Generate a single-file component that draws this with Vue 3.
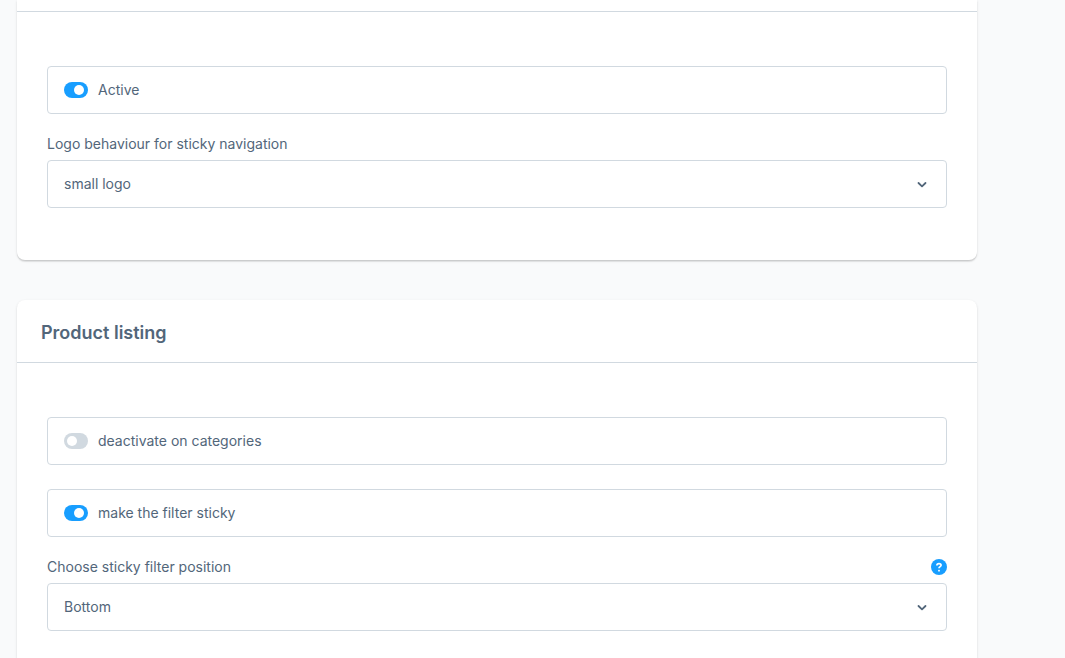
<template>
  <main class="page">
    <section class="card card--continued">
      <header class="card-header"></header>
      <div class="card-body">
        <label class="switch-field">
          <input v-model="navigationActive" type="checkbox" class="switch" />
          <span>Active</span>
        </label>

        <div class="select-field">
          <div class="field-head">
            <label for="logo-behaviour">Logo behaviour for sticky navigation</label>
          </div>
          <div class="select-box">
            <select id="logo-behaviour" v-model="logoBehaviour">
              <option v-for="option in logoOptions" :key="option">{{ option }}</option>
            </select>
            <svg class="chevron" viewBox="0 0 16 16" aria-hidden="true">
              <path d="M4.5 7 8 10.4 11.5 7" />
            </svg>
          </div>
        </div>
      </div>
    </section>

    <section class="card card--last">
      <header class="card-header">
        <h2>Product listing</h2>
      </header>
      <div class="card-body">
        <label class="switch-field">
          <input v-model="deactivated" type="checkbox" class="switch" />
          <span>deactivate on categories</span>
        </label>

        <label class="switch-field">
          <input v-model="filterSticky" type="checkbox" class="switch" />
          <span>make the filter sticky</span>
        </label>

        <div class="select-field">
          <div class="field-head">
            <label for="filter-position">Choose sticky filter position</label>
            <button type="button" class="help">
              <svg viewBox="0 0 16 16" aria-hidden="true">
                <circle cx="8" cy="8" r="8" />
                <path d="M5.9 6.4C5.9 5.2 6.8 4.6 8 4.6s2.1.6 2.1 1.7c0 1.4-2.1 1.3-2.1 2.9" />
                <rect x="7.1" y="10.8" width="1.8" height="1.8" rx="0.6" />
              </svg>
            </button>
          </div>
          <div class="select-box">
            <select id="filter-position" v-model="filterPosition">
              <option v-for="option in positionOptions" :key="option">{{ option }}</option>
            </select>
            <svg class="chevron" viewBox="0 0 16 16" aria-hidden="true">
              <path d="M4.5 7 8 10.4 11.5 7" />
            </svg>
          </div>
        </div>
      </div>
    </section>
  </main>
</template>

<script setup>
import { ref } from 'vue'

const logoOptions = ['small logo']
const positionOptions = ['Bottom']

const navigationActive = ref(true)
const logoBehaviour = ref('small logo')
const deactivated = ref(false)
const filterSticky = ref(true)
const filterPosition = ref('Bottom')
</script>

<style>
body {
  margin: 0;
  background: #f9fafb;
}
</style>

<style scoped>
.page {
  display: flex;
  flex-direction: column;
  gap: 40px;
  box-sizing: border-box;
  min-height: 100vh;
  padding: 0 88px 0 17px;
  background: #f9fafb;
  color: #52667a;
  font-family: Inter, sans-serif;
  font-size: 14px;
  line-height: 20px;
}

.card {
  background: #fff;
  border-radius: 8px;
  box-shadow: 0 1px 1px rgba(0, 0, 0, 0.08), 0 2px 1px rgba(0, 0, 0, 0.06), 0 1px 3px rgba(0, 0, 0, 0.1);
}

.card--continued {
  border-top-left-radius: 0;
  border-top-right-radius: 0;
}

/* runs on to the bottom edge of the window */
.card--last {
  flex: 1;
  border-bottom-left-radius: 0;
  border-bottom-right-radius: 0;
}

.card-header {
  padding: 21px 24px 17px;
  border-bottom: 1px solid #d1d9e0;
}

.card--continued .card-header {
  padding: 11px 0 0;
}

.card-header h2 {
  margin: 0;
  font-size: 18px;
  font-weight: 600;
  line-height: 24px;
}

.card-body {
  padding: 54px 30px 52px;
}

.card--last .card-body {
  padding-bottom: 20px;
}

.switch-field {
  display: flex;
  align-items: center;
  gap: 10px;
  box-sizing: border-box;
  height: 48px;
  padding: 0 16px;
  border: 1px solid #d1d9e0;
  border-radius: 4px;
  cursor: pointer;
}

.switch-field + .switch-field {
  margin-top: 24px;
}

.switch-field + .select-field {
  margin-top: 20px;
}

.switch {
  display: flex;
  align-items: center;
  appearance: none;
  box-sizing: border-box;
  width: 24px;
  height: 16px;
  margin: 0;
  padding: 0 4px 0 3px;
  border-radius: 8px;
  background: #d1d9e0;
  cursor: pointer;
}

.switch::before {
  content: '';
  width: 10px;
  height: 10px;
  border-radius: 50%;
  background: #fff;
}

.switch:checked {
  justify-content: flex-end;
  background: #189eff;
}

.field-head {
  display: flex;
  align-items: center;
  justify-content: space-between;
  margin-bottom: 6px;
}

.help {
  width: 16px;
  height: 16px;
  padding: 0;
  border: 0;
  background: none;
  cursor: pointer;
}

.help svg {
  display: block;
}

.help circle {
  fill: #189eff;
}

.help path {
  fill: none;
  stroke: #fff;
  stroke-width: 1.7;
}

.help rect {
  fill: #fff;
}

.select-box {
  display: grid;
  align-items: center;
}

.select-box > * {
  grid-area: 1 / 1;
}

.select-box select {
  appearance: none;
  box-sizing: border-box;
  width: 100%;
  height: 48px;
  margin: 0;
  padding: 0 48px 0 16px;
  border: 1px solid #d1d9e0;
  border-radius: 4px;
  background: #fff;
  color: inherit;
  font: inherit;
}

.chevron {
  justify-self: end;
  width: 16px;
  height: 16px;
  margin-right: 17px;
  fill: none;
  stroke: #52667a;
  stroke-width: 1.8;
  stroke-linecap: round;
  stroke-linejoin: round;
  pointer-events: none;
}
</style>
